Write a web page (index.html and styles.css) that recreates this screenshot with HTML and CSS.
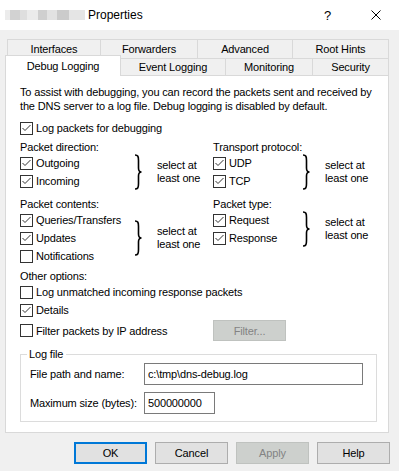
FILE: index.html
```html
<!DOCTYPE html>
<html>
<head>
    <link rel="stylesheet" href="styles.css">
</head>
<body>
    <div class="titlebar">
        <div class="title-icon"></div>
        <span class="title-text">Properties</span>
        <span class="title-help">?</span>
        <svg class="title-close" width="10" height="10" viewBox="0 0 10 10"><path d="M0.5 0.5 L9.5 9.5 M9.5 0.5 L0.5 9.5" stroke="#000" stroke-width="1"/></svg>
    </div>

    <div class="tabs">
        <div class="tab-row back">
            <div class="tab tab-interfaces">Interfaces</div>
            <div class="tab tab-forwarders">Forwarders</div>
            <div class="tab tab-advanced">Advanced</div>
            <div class="tab tab-roothints">Root Hints</div>
        </div>
        <div class="tab-row front">
            <div class="tab tab-debug selected">Debug Logging</div>
            <div class="tab tab-event">Event Logging</div>
            <div class="tab tab-monitoring">Monitoring</div>
            <div class="tab tab-security">Security</div>
        </div>
    </div>

    <div class="panel">
        <p class="intro">To assist with debugging, you can record the packets sent and received by the DNS server to a log file. Debug logging is disabled by default.</p>

        <div class="check first">
            <svg class="cb" width="13" height="13" viewBox="0 0 13 13"><rect x="0.5" y="0.5" width="12" height="12" fill="#fff" stroke="#333"/><path d="M2.5 6 L5 8.5 L10.5 3" fill="none" stroke="#333"/></svg>
            <span>Log packets for debugging</span>
        </div>

        <div class="cols">
            <div class="group">
                <div class="label">Packet direction:</div>
                <div class="choice">
                    <div class="checks checks-left">
                        <div class="check">
                            <svg class="cb" width="13" height="13" viewBox="0 0 13 13"><rect x="0.5" y="0.5" width="12" height="12" fill="#fff" stroke="#333"/><path d="M2.5 6 L5 8.5 L10.5 3" fill="none" stroke="#333"/></svg>
                            <span>Outgoing</span>
                        </div>
                        <div class="check">
                            <svg class="cb" width="13" height="13" viewBox="0 0 13 13"><rect x="0.5" y="0.5" width="12" height="12" fill="#fff" stroke="#333"/><path d="M2.5 6 L5 8.5 L10.5 3" fill="none" stroke="#333"/></svg>
                            <span>Incoming</span>
                        </div>
                    </div>
                    <svg class="brace" width="8" height="36" viewBox="0 0 8 36"><path d="M1 1 C4 1 4.5 2.5 4.5 6.5 L4.5 14 C4.5 16.5 5.5 18 7.5 18 C5.5 18 4.5 19.5 4.5 22 L4.5 29.5 C4.5 33.5 4 35 1 35" fill="none" stroke="#000" stroke-width="1.6"/></svg>
                    <div class="note">select at<br>least one</div>
                </div>
            </div>

            <div class="group">
                <div class="label">Transport protocol:</div>
                <div class="choice">
                    <div class="checks checks-right">
                        <div class="check">
                            <svg class="cb" width="13" height="13" viewBox="0 0 13 13"><rect x="0.5" y="0.5" width="12" height="12" fill="#fff" stroke="#333"/><path d="M2.5 6 L5 8.5 L10.5 3" fill="none" stroke="#333"/></svg>
                            <span>UDP</span>
                        </div>
                        <div class="check">
                            <svg class="cb" width="13" height="13" viewBox="0 0 13 13"><rect x="0.5" y="0.5" width="12" height="12" fill="#fff" stroke="#333"/><path d="M2.5 6 L5 8.5 L10.5 3" fill="none" stroke="#333"/></svg>
                            <span>TCP</span>
                        </div>
                    </div>
                    <svg class="brace" width="8" height="36" viewBox="0 0 8 36"><path d="M1 1 C4 1 4.5 2.5 4.5 6.5 L4.5 14 C4.5 16.5 5.5 18 7.5 18 C5.5 18 4.5 19.5 4.5 22 L4.5 29.5 C4.5 33.5 4 35 1 35" fill="none" stroke="#000" stroke-width="1.6"/></svg>
                    <div class="note">select at<br>least one</div>
                </div>
            </div>

            <div class="group">
                <div class="label">Packet contents:</div>
                <div class="choice">
                    <div class="checks checks-left">
                        <div class="check">
                            <svg class="cb" width="13" height="13" viewBox="0 0 13 13"><rect x="0.5" y="0.5" width="12" height="12" fill="#fff" stroke="#333"/><path d="M2.5 6 L5 8.5 L10.5 3" fill="none" stroke="#333"/></svg>
                            <span>Queries/Transfers</span>
                        </div>
                        <div class="check">
                            <svg class="cb" width="13" height="13" viewBox="0 0 13 13"><rect x="0.5" y="0.5" width="12" height="12" fill="#fff" stroke="#333"/><path d="M2.5 6 L5 8.5 L10.5 3" fill="none" stroke="#333"/></svg>
                            <span>Updates</span>
                        </div>
                        <div class="check">
                            <svg class="cb" width="13" height="13" viewBox="0 0 13 13"><rect x="0.5" y="0.5" width="12" height="12" fill="#fff" stroke="#333"/></svg>
                            <span>Notifications</span>
                        </div>
                    </div>
                    <svg class="brace" width="8" height="36" viewBox="0 0 8 36"><path d="M1 1 C4 1 4.5 2.5 4.5 6.5 L4.5 14 C4.5 16.5 5.5 18 7.5 18 C5.5 18 4.5 19.5 4.5 22 L4.5 29.5 C4.5 33.5 4 35 1 35" fill="none" stroke="#000" stroke-width="1.6"/></svg>
                    <div class="note">select at<br>least one</div>
                </div>
            </div>

            <div class="group">
                <div class="label">Packet type:</div>
                <div class="choice">
                    <div class="checks checks-right">
                        <div class="check">
                            <svg class="cb" width="13" height="13" viewBox="0 0 13 13"><rect x="0.5" y="0.5" width="12" height="12" fill="#fff" stroke="#333"/><path d="M2.5 6 L5 8.5 L10.5 3" fill="none" stroke="#333"/></svg>
                            <span>Request</span>
                        </div>
                        <div class="check">
                            <svg class="cb" width="13" height="13" viewBox="0 0 13 13"><rect x="0.5" y="0.5" width="12" height="12" fill="#fff" stroke="#333"/><path d="M2.5 6 L5 8.5 L10.5 3" fill="none" stroke="#333"/></svg>
                            <span>Response</span>
                        </div>
                    </div>
                    <svg class="brace" width="8" height="36" viewBox="0 0 8 36"><path d="M1 1 C4 1 4.5 2.5 4.5 6.5 L4.5 14 C4.5 16.5 5.5 18 7.5 18 C5.5 18 4.5 19.5 4.5 22 L4.5 29.5 C4.5 33.5 4 35 1 35" fill="none" stroke="#000" stroke-width="1.6"/></svg>
                    <div class="note">select at<br>least one</div>
                </div>
            </div>
        </div>

        <div class="label other">Other options:</div>
        <div class="check">
            <svg class="cb" width="13" height="13" viewBox="0 0 13 13"><rect x="0.5" y="0.5" width="12" height="12" fill="#fff" stroke="#333"/></svg>
            <span>Log unmatched incoming response packets</span>
        </div>
        <div class="check">
            <svg class="cb" width="13" height="13" viewBox="0 0 13 13"><rect x="0.5" y="0.5" width="12" height="12" fill="#fff" stroke="#333"/><path d="M2.5 6 L5 8.5 L10.5 3" fill="none" stroke="#333"/></svg>
            <span>Details</span>
        </div>
        <div class="filter-row">
            <div class="check">
                <svg class="cb" width="13" height="13" viewBox="0 0 13 13"><rect x="0.5" y="0.5" width="12" height="12" fill="#fff" stroke="#333"/></svg>
                <span>Filter packets by IP address</span>
            </div>
            <button class="btn disabled filter-btn">Filter...</button>
        </div>

        <fieldset class="logfile">
            <legend>Log file</legend>
            <div class="field">
                <label>File path and name:</label>
                <input class="text-input path-input" type="text" value="c:\tmp\dns-debug.log">
            </div>
            <div class="field second">
                <label>Maximum size (bytes):</label>
                <input class="text-input size-input" type="text" value="500000000">
            </div>
        </fieldset>
    </div>

    <div class="buttons">
        <button class="btn default">OK</button>
        <button class="btn">Cancel</button>
        <button class="btn disabled">Apply</button>
        <button class="btn">Help</button>
    </div>
</body>
</html>
```

FILE: styles.css
```css
body {
    margin: 0;
    width: 399px;
    height: 471px;
    overflow: hidden;
    background-color: #f0f0f0;
    font-family: "Liberation Sans", Arial, sans-serif;
    font-size: 11px;
    letter-spacing: -0.15px;
    color: #000;
}

/* title bar */
.titlebar {
    height: 30px;
    background-color: #fff;
    display: flex;
    align-items: center;
    padding-left: 5px;
}

.title-icon {
    width: 80px;
    height: 10px;
    background: linear-gradient(to right, #ececec 0 5px, #d2d2d2 5px 15px, #dedede 15px 22px, #ebebeb 22px 33px, #cfcfcf 33px 42px, #e2e2e2 42px 52px, #cbcbcb 52px 64px, #e5e5e5 64px 80px);
}

.title-text {
    margin-left: 3px;
    font-size: 12px;
    letter-spacing: 0;
}

.title-help {
    margin-left: auto;
    font-size: 13px;
}

.title-close {
    margin-left: 40px;
    margin-right: 18px;
}

/* tabs */
.tabs {
    margin-top: 9px;
}

.tab-row {
    display: flex;
}

.tab-row.back {
    margin-left: 7px;
}

.tab-row.front {
    margin-left: 5px;
    margin-top: -3px;
    height: 20px;
    align-items: flex-end;
}

.tab {
    box-sizing: border-box;
    height: 19px;
    border: 1px solid #d9d9d9;
    border-bottom: none;
    margin-left: -1px;
    background-color: #f0f0f0;
    display: flex;
    align-items: center;
    justify-content: center;
}

.tab:first-child {
    margin-left: 0;
}

.tab-row.front .tab {
    height: 17px;
}

.tab-row.front .tab.selected {
    position: relative;
    z-index: 1;
    height: 21px;
    margin-bottom: -1px;
    background-color: #fff;
    padding-bottom: 1px;
}

.tab-interfaces { width: 94px; }
.tab-forwarders { width: 98px; }
.tab-advanced { width: 96px; }
.tab-roothints { width: 97px; }
.tab-debug { width: 116px; }
.tab-event { width: 106px; }
.tab-monitoring { width: 88px; }
.tab-security { width: 77px; }

/* page */
.panel {
    box-sizing: border-box;
    margin-left: 5px;
    width: 384px;
    height: 358px;
    border: 1px solid #d9d9d9;
    background-color: #fff;
    padding: 9px 11px 0 14px;
}

.intro {
    margin: 0;
    line-height: 14px;
}

.check {
    display: flex;
    align-items: center;
    height: 18px;
    white-space: nowrap;
}

.check .cb {
    flex: none;
    margin-right: 3px;
}

.check.first {
    margin-top: 6px;
}

.label {
    line-height: 14px;
}

.label.other {
    margin-top: 4px;
}

.cols {
    display: grid;
    grid-template-columns: 193px 1fr;
    row-gap: 7px;
    margin-top: 3px;
}

.choice {
    display: flex;
    align-items: center;
}

.checks-left {
    width: 114px;
}

.checks-right {
    width: 89px;
}

.brace {
    flex: none;
}

.note {
    margin-left: 15px;
    line-height: 13px;
}

.filter-row {
    display: flex;
    align-items: center;
    height: 21px;
    margin-top: 1px;
}

.filter-row .check {
    width: 193px;
}

/* buttons */
.btn {
    box-sizing: border-box;
    width: 73px;
    height: 22px;
    padding: 0;
    border: 1px solid #adadad;
    background-color: #e1e1e1;
    font-family: "Liberation Sans", Arial, sans-serif;
    font-size: 11px;
    letter-spacing: -0.15px;
    color: #000;
}

.btn.default {
    border: 2px solid #0078d7;
}

.btn.disabled {
    background-color: #cdd0cd;
    border-color: #bfc2bf;
    color: #838383;
}

.filter-btn {
    height: 21px;
}

/* log file group */
.logfile {
    margin: 6px 0 0 0;
    padding: 0 0 7px 6px;
    border: 1px solid #dcdcdc;
    min-width: 0;
}

.logfile legend {
    padding: 0 3px 0 2px;
    line-height: 14px;
}

.field {
    display: flex;
    align-items: center;
    margin-left: 3px;
    margin-top: 2px;
}

.field.second {
    margin-top: 7px;
}

.field label {
    width: 114px;
}

.text-input {
    box-sizing: border-box;
    height: 22px;
    border: 1px solid #7a7a7a;
    padding: 0 0 0 3px;
    margin: 0;
    font-family: "Liberation Sans", Arial, sans-serif;
    font-size: 11px;
    letter-spacing: -0.15px;
    color: #000;
    background-color: #fff;
}

.path-input {
    width: 219px;
}

.size-input {
    width: 71px;
}

.buttons {
    display: flex;
    justify-content: flex-end;
    gap: 8px;
    padding-right: 9px;
    margin-top: 9px;
}
```
